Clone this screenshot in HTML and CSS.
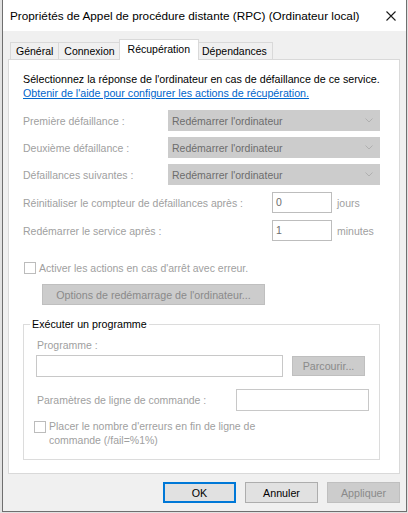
FILE: index.html
```html
<!DOCTYPE html>
<html lang="fr">
<head>
<meta charset="utf-8">
<title>Propriétés</title>
<link rel="stylesheet" href="styles.css">
</head>
<body>
<div class="window">
  <div class="titlebar">
    <span class="title">Propriétés de Appel de procédure distante (RPC) (Ordinateur local)</span>
    <svg class="close" width="10" height="10" viewBox="0 0 10 10"><path d="M0.5 0.5 L9.5 9.5 M9.5 0.5 L0.5 9.5" stroke="#1a1a1a" stroke-width="1.1" fill="none"/></svg>
  </div>
  <div class="client">
    <div class="tabs">
      <div class="tab">Général</div>
      <div class="tab">Connexion</div>
      <div class="tab tab-active">Récupération</div>
      <div class="tab">Dépendances</div>
    </div>
    <div class="panel">
      <p class="intro">Sélectionnez la réponse de l'ordinateur en cas de défaillance de ce service.</p>
      <a class="help" href="#">Obtenir de l'aide pour configurer les actions de récupération.</a>

      <div class="row row-combo row-first">
        <span class="label label-combo">Première défaillance :</span>
        <div class="combo"><span>Redémarrer l'ordinateur</span><svg class="chev" width="8" height="5" viewBox="0 0 8 5"><path d="M0.5 0.5 L4 4 L7.5 0.5" stroke="#b0b0b0" fill="none"/></svg></div>
      </div>
      <div class="row row-combo">
        <span class="label label-combo">Deuxième défaillance :</span>
        <div class="combo"><span>Redémarrer l'ordinateur</span><svg class="chev" width="8" height="5" viewBox="0 0 8 5"><path d="M0.5 0.5 L4 4 L7.5 0.5" stroke="#b0b0b0" fill="none"/></svg></div>
      </div>
      <div class="row row-combo">
        <span class="label label-combo">Défaillances suivantes :</span>
        <div class="combo"><span>Redémarrer l'ordinateur</span><svg class="chev" width="8" height="5" viewBox="0 0 8 5"><path d="M0.5 0.5 L4 4 L7.5 0.5" stroke="#b0b0b0" fill="none"/></svg></div>
      </div>

      <div class="row row-num">
        <span class="label label-num">Réinitialiser le compteur de défaillances après :</span>
        <div class="num">0</div>
        <span class="label unit">jours</span>
      </div>
      <div class="row row-num">
        <span class="label label-num">Redémarrer le service après :</span>
        <div class="num">1</div>
        <span class="label unit">minutes</span>
      </div>

      <div class="check check-main">
        <span class="box"></span>
        <span class="label check-text">Activer les actions en cas d'arrêt avec erreur.</span>
      </div>

      <div class="btn btn-disabled btn-options">Options de redémarrage de l'ordinateur...</div>

      <fieldset class="group">
        <legend class="legend">Exécuter un programme</legend>
        <div class="label prog-label">Programme :</div>
        <div class="prog-row">
          <div class="field field-prog"></div>
          <div class="btn btn-disabled btn-browse">Parcourir...</div>
        </div>
        <div class="params-row">
          <span class="label label-params">Paramètres de ligne de commande :</span>
          <div class="field field-params"></div>
        </div>
        <div class="check check-fail">
          <span class="box"></span>
          <span class="label check-text">Placer le nombre d'erreurs en fin de ligne de<br>commande (/fail=%1%)</span>
        </div>
      </fieldset>
    </div>
    <div class="actions">
      <div class="btn btn-default">OK</div>
      <div class="btn">Annuler</div>
      <div class="btn btn-disabled">Appliquer</div>
    </div>
  </div>
</div>
</body>
</html>
```

FILE: styles.css
```css
html, body {
  margin: 0;
  padding: 0;
}
body {
  background: #e2e2e2;
  font-family: "Liberation Sans", Arial, sans-serif;
  font-size: 10.5px;
  color: #000;
}
.window {
  margin-left: 2px;
  width: 405px;
  height: 512px;
  box-sizing: border-box;
  border: 1px solid #6f6f6f;
  border-top: 0;
  background: #f0f0f0;
}
.titlebar {
  height: 31px;
  background: #fff;
  display: flex;
  align-items: center;
  padding-left: 7px;
}
.title {
  flex: 1;
  font-size: 11.75px;
  white-space: nowrap;
}
.close {
  margin-right: 10px;
  display: block;
}
.client {
  padding: 8px 6px 0 5px;
}
.tabs {
  display: flex;
  align-items: flex-end;
  height: 21px;
  padding-left: 2px;
  margin-bottom: -1px;
  position: relative;
  z-index: 1;
}
.tab {
  height: 17px;
  box-sizing: border-box;
  border: 1px solid #d9d9d9;
  border-bottom: 0;
  padding: 1px 5px 0;
  line-height: 14px;
  font-size: 10.5px;
  margin-bottom: 1px;
  background: #f0f0f0;
  white-space: nowrap;
}
.tab + .tab {
  margin-left: -1px;
}
.tab-active,
.tab + .tab-active {
  height: 21px;
  margin: 0 -2px 0 -2px;
  padding: 2px 8px 0;
  background: #fff;
  position: relative;
  z-index: 2;
}
.panel {
  width: 392px;
  box-sizing: border-box;
  background: #fff;
  border: 1px solid #d9d9d9;
  padding: 12px 18px 13px 14px;
}
.intro {
  margin: 0;
  font-size: 10.7px;
  line-height: 14px;
}
.help {
  display: block;
  font-size: 10.7px;
  line-height: 14px;
  color: #0066cc;
  text-decoration: underline;
  width: max-content;
}
.label {
  color: #a0a0a0;
  line-height: 14px;
  white-space: nowrap;
}
.row {
  display: flex;
  align-items: center;
  height: 21px;
}
.row-combo {
  margin-top: 6px;
}
.row-first {
  margin-top: 10px;
}
.row-num {
  margin-top: 7px;
}
.label-combo {
  width: 145px;
  flex: none;
}
.combo {
  width: 212px;
  height: 21px;
  box-sizing: border-box;
  background: #cccccc;
  color: #6d6d6d;
  display: flex;
  align-items: center;
  justify-content: space-between;
  padding: 0 7px 0 4px;
}
.chev {
  display: block;
}
.label-num {
  width: 249px;
  flex: none;
}
.num {
  width: 60px;
  height: 21px;
  box-sizing: border-box;
  border: 1px solid #bdbdbd;
  background: #fff;
  color: #6d6d6d;
  padding-left: 3px;
  line-height: 19px;
}
.unit {
  margin-left: 5px;
}
.check {
  display: flex;
}
.box {
  width: 12px;
  height: 12px;
  box-sizing: border-box;
  border: 1px solid #bcbcbc;
  background: #fff;
  flex: none;
}
.check-main {
  margin-top: 20px;
  align-items: center;
  height: 13px;
}
.check-main .box {
  margin-left: 1px;
}
.check-text {
  margin-left: 3px;
}
.btn {
  width: 73px;
  height: 21px;
  box-sizing: border-box;
  border: 1px solid #adadad;
  background: #e1e1e1;
  color: #000;
  display: flex;
  align-items: center;
  justify-content: center;
  font-size: 10.7px;
  white-space: nowrap;
}
.btn-disabled {
  background: #cccccc;
  border-color: #bfbfbf;
  color: #8a8a8a;
}
.btn-default {
  border: 2px solid #0078d7;
}
.btn-options {
  margin: 10px 0 0 19px;
  width: 223px;
}
.group {
  margin: 12px 0 0 0;
  padding: 0 10px 12px 13px;
  border: 1px solid #dcdcdc;
  width: 357px;
  box-sizing: border-box;
  min-inline-size: 0;
}
.legend {
  padding: 0 2px;
  margin-left: -7px;
  font-size: 10.7px;
  line-height: 14px;
  color: #000;
}
.prog-label {
  margin-top: 7px;
}
.prog-row {
  display: flex;
  align-items: center;
  margin-top: 3px;
}
.field {
  height: 22px;
  box-sizing: border-box;
  border: 1px solid #c8c8c8;
  background: #fff;
}
.field-prog {
  width: 247px;
  margin-left: -1px;
}
.btn-browse {
  margin-left: 9px;
  height: 20px;
}
.params-row {
  display: flex;
  align-items: center;
  margin-top: 12px;
}
.label-params {
  width: 199px;
  flex: none;
}
.field-params {
  width: 133px;
}
.check-fail {
  margin-top: 8px;
  align-items: flex-start;
}
.check-fail .box {
  margin: 2px 0 0 -3px;
}
.actions {
  display: flex;
  justify-content: flex-end;
  gap: 9px;
  margin-top: 8px;
  width: 392px;
}
```
